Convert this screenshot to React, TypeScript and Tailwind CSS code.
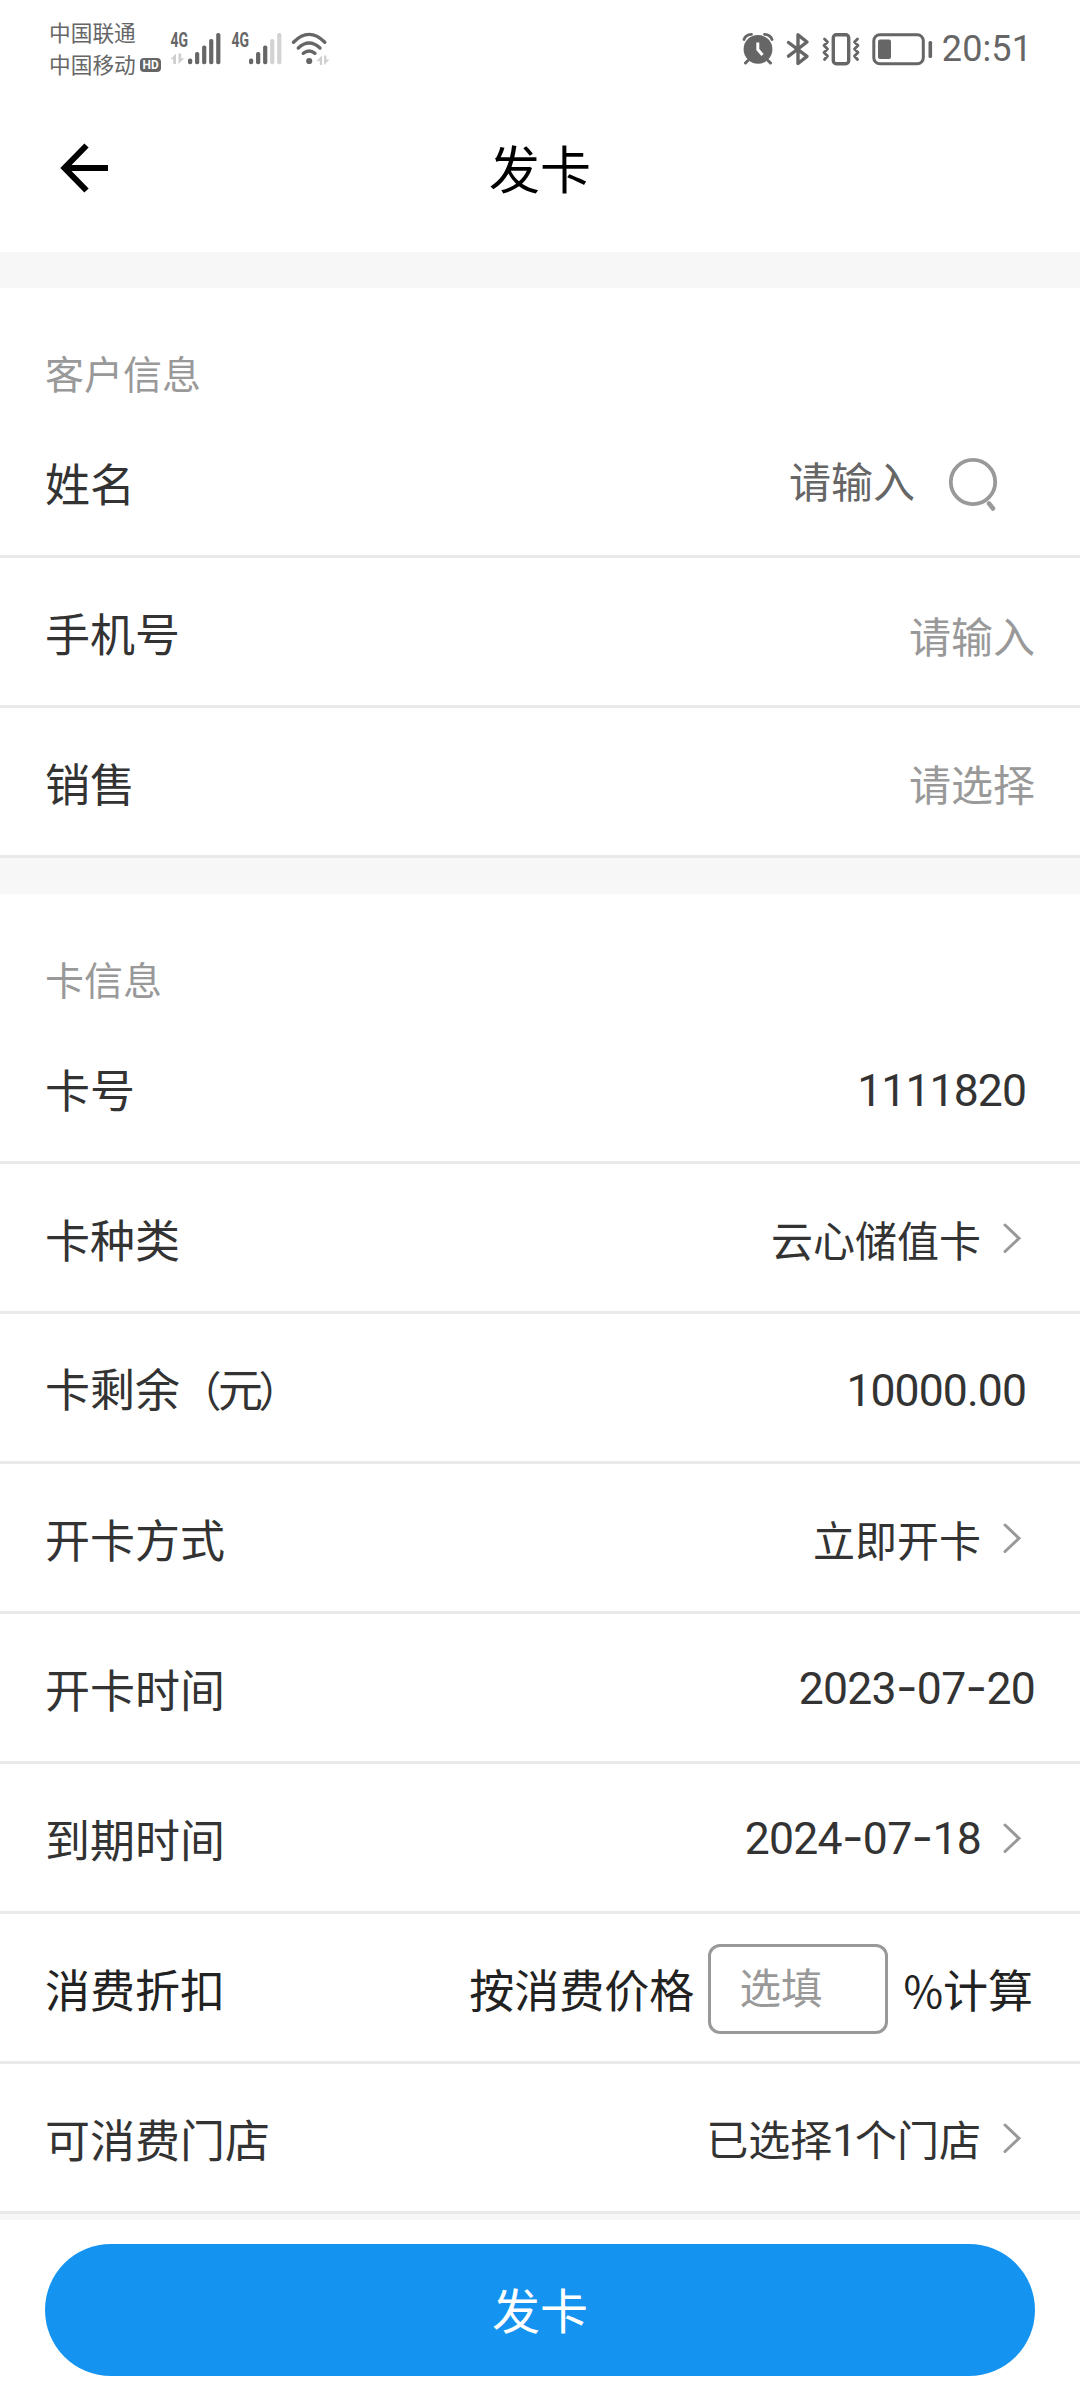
import React from "react";

const cjk = "font-['Noto_Sans_CJK_SC',sans-serif]";

function DataArrows({ x, y }: { x: number; y: number }) {
  return (
    <g transform={`translate(${x} ${y})`} fill="#cfcfcf">
      <path d="M5.500 0V10.500H2.700V5.800H0Z" />
      <path d="M8 10.500V0H10.700V4.700H14Z" />
    </g>
  );
}

function Signal({ level, arrows }: { level: number; arrows?: boolean }) {
  const tops = [28.5, 22, 15.5, 9, 3];
  return (
    <svg width="54" height="36" viewBox="0 0 54 36">
      <text x="2.5" y="17.300" fontFamily="Roboto, sans-serif" fontWeight="700" fontSize="19.500" textLength="17.5" lengthAdjust="spacingAndGlyphs" fill="#666">
        4G
      </text>
      {arrows && <DataArrows x={2.5} y={23.5} />}
      {tops.map((top, i) => (
        <rect key={top} x={20 + i * 7.05} y={top} width="4.2" height={34.2 - top} rx="1.8" fill={i < level ? "#666" : "#d3d3d3"} />
      ))}
    </svg>
  );
}

function StatusBar() {
  return (
    <div className="flex h-[97px] items-start justify-between pl-[49px] pr-[48px] text-[#666]">
      <div className="flex">
        <div className="flex w-[119px] flex-col pt-[16px] text-[21.7px] leading-[32px]">
          <span>中国联通</span>
          <div className="flex items-center">
            <span>中国移动</span>
            <svg className="ml-[4px] mt-[2px]" width="21" height="14" viewBox="0 0 21 14">
              <rect width="21" height="14" rx="4" fill="#666" />
              <text x="2.6" y="11.4" fontFamily="Roboto, sans-serif" fontWeight="700" fontSize="12.5" textLength="16" lengthAdjust="spacingAndGlyphs" fill="#fff">
                HD
              </text>
            </svg>
          </div>
        </div>
        <div className="flex pt-[30px]">
          <Signal level={5} arrows />
          <span className="w-[7px]" />
          <Signal level={3} />
          <svg className="ml-[7px]" width="42" height="36" viewBox="0 0 42 36">
            <g fill="none" stroke="#666" strokeWidth="3.4" strokeLinecap="round">
              <path d="M3.5 12.2Q19 -3.5 34.8 12.2" />
              <path d="M8.3 18Q19 8 30 18" />
              <path d="M13.3 23.3Q19 18.5 25 23.3" />
            </g>
            <circle cx="19.2" cy="31" r="3.1" fill="#666" />
            <g transform="translate(26.5 25.5)" fill="#cfcfcf">
              <path d="M5.5 0V9.6H3.300V5.600H0Z" />
              <path d="M7.6 9.600V0H9.800V4H13Z" />
            </g>
          </svg>
        </div>
      </div>
      <div className="flex items-center pt-[30px]">
        <svg width="32" height="38" viewBox="0 0 32 38">
          <circle cx="16" cy="19.3" r="14.4" fill="#666" />
          <path d="M2 9.5Q3.5 4.5 9.5 4.3M22.5 4.3Q28.500 4.500 30 9.500" fill="none" stroke="#666" strokeWidth="2.800" strokeLinecap="round" />
          <path d="M6 30.500L3.500 33M26 30.500L28.500 33" stroke="#666" strokeWidth="3" strokeLinecap="round" />
          <path d="M15.8 12.500V19.500L20.500 25" fill="none" stroke="#fff" strokeWidth="3" />
        </svg>
        <svg className="ml-[12px]" width="24" height="38" viewBox="0 0 24 38">
          <path d="M2.500 12.500L21 26.300L12 33.500V4.800L21 12L2.500 26.200" fill="none" stroke="#666" strokeWidth="3.400" strokeLinejoin="round" strokeLinecap="round" />
        </svg>
        <svg className="ml-[11px]" width="40" height="38" viewBox="0 0 40 38">
          <rect x="12.300" y="4.700" width="15.400" height="29" rx="3" fill="none" stroke="#666" strokeWidth="3.400" />
          <path d="M3.500 9L6.500 12L3 15.500L6.500 19L3 22.500L6.500 26L3.500 29.500M36.500 9L33.500 12L37 15.500L33.500 19L37 22.500L33.500 26L36.500 29.500" fill="none" stroke="#666" strokeWidth="2.800" strokeLinejoin="round" strokeLinecap="round" />
        </svg>
        <svg className="ml-[11px]" width="62" height="38" viewBox="0 0 62 38">
          <rect x="1.800" y="4.800" width="49.500" height="29" rx="6" fill="none" stroke="#666" strokeWidth="3" />
          <rect x="6" y="9.500" width="13" height="19.500" rx="2" fill="#666" />
          <rect x="56.500" y="11" width="3.600" height="17" rx="1.500" fill="#666" />
        </svg>
        <span className="ml-[8px] font-[Roboto] text-[36px] leading-[38px] tracking-[0.1px]">20:51</span>
      </div>
    </div>
  );
}

function Header() {
  return (
    <header className="grid h-[155px] grid-cols-[200px_1fr_200px] pt-[32px]">
      <svg className="ml-[60px] mt-[14px]" width="50" height="50" viewBox="0 0 50 50" fill="none" stroke="#000" strokeWidth="6">
        <path d="M26.500 2.500L4.500 25L26.500 47.500M4 25H48" />
      </svg>
      <h1 className="text-center text-[51px] leading-[76px] text-black">发卡</h1>
    </header>
  );
}

function SectionTitle({ children }: { children: React.ReactNode }) {
  return <h2 className="h-[120px] px-[45px] pt-[54px] text-[39px] leading-[60px] text-[#999]">{children}</h2>;
}

function Row({ label, children, pad = "pr-[45px]" }: { label: React.ReactNode; children: React.ReactNode; pad?: string }) {
  return (
    <div className={`flex h-[150px] items-center justify-between border-b-[3px] border-[#e9e9e9] pl-[45px] ${pad}`}>
      <span className="pt-[2px] text-[45px] leading-[60px] text-[#333]">{label}</span>
      <div className="flex items-center text-[42px] leading-[60px] text-[#333]">{children}</div>
    </div>
  );
}

function Chevron() {
  return (
    <svg className="ml-[21px]" width="20" height="32" viewBox="0 0 20 32" fill="none" stroke="#999" strokeWidth="3" strokeLinecap="round">
      <path d="M3 3L17 16.300L3 29.500" />
    </svg>
  );
}

function Num({ children }: { children: React.ReactNode }) {
  return <span className="pt-[6px] font-[Roboto] text-[44.5px] tracking-[-0.9px]">{children}</span>;
}

function DateText({ value }: { value: string }) {
  return (
    <span className="font-[Roboto] text-[44.5px] tracking-[-0.7px]">
      {value.split("-").map((part, i) => (
        <React.Fragment key={i}>
          {i > 0 && <span className="font-[Inter] text-[47px]">-</span>}
          {part}
        </React.Fragment>
      ))}
    </span>
  );
}

export default function App() {
  return (
    <div className={`flex h-[2400px] w-[1080px] flex-col overflow-hidden bg-white ${cjk}`} lang="zh-CN">
      <StatusBar />
      <Header />
      <div className="h-[36px] bg-[#f7f7f7]" />

      <section>
        <SectionTitle>客户信息</SectionTitle>
        <Row label="姓名" pad="pr-[81px]">
          <span className="-mt-[4px] text-[#666]">请输入</span>
          <svg className="ml-[33px] mt-[4px]" width="51" height="56" viewBox="0 0 51 56" fill="none" stroke="#999">
            <circle cx="25" cy="26" r="22.200" strokeWidth="3.800" />
            <path d="M41 47.500L45 52.500" strokeWidth="4.500" strokeLinecap="round" />
          </svg>
        </Row>
        <Row label="手机号">
          <span className="mt-[6px] text-[#999]">请输入</span>
        </Row>
        <Row label="销售">
          <span className="mt-[2px] text-[#999]">请选择</span>
        </Row>
      </section>
      <div className="h-[36px] bg-[#f7f7f7]" />

      <section>
        <SectionTitle>卡信息</SectionTitle>
        <Row label="卡号" pad="pr-[54px]">
          <Num>1111820</Num>
        </Row>
        <Row label="卡种类" pad="pr-[58px]">
          <span className="pt-[3px]">云心储值卡</span>
          <Chevron />
        </Row>
        <Row
          label={
            <span className="[font-feature-settings:'palt']">
              卡剩余<span className="-mr-[2px] ml-[19px] text-[42px]">（</span>元<span className="-ml-[3px] text-[42px]">）</span>
            </span>
          }
          pad="pr-[54px]"
        >
          <Num>10000.00</Num>
        </Row>
        <Row label="开卡方式" pad="pr-[58px]">
          <span className="pt-[3px]">立即开卡</span>
          <Chevron />
        </Row>
        <Row label="开卡时间">
          <DateText value="2023-07-20" />
        </Row>
        <Row label="到期时间" pad="pr-[58px]">
          <DateText value="2024-07-18" />
          <Chevron />
        </Row>
        <Row label={<span className="text-[#222]">消费折扣</span>} pad="pr-[47px]">
          <span className="pt-[2px] text-[45px] text-[#222]">按消费价格</span>
          <div className="ml-[14px] mt-[3px] flex h-[90px] w-[180px] items-center rounded-[12px] border-[3px] border-[#999] pb-[7px] pl-[28px] text-[41.5px] text-[#999]">选填</div>
          <span className="ml-[15px] pt-[2px] text-[45px] text-[#222]">
            <span className="text-[43px]">%</span>计算
          </span>
        </Row>
        <Row label="可消费门店" pad="pr-[58px]">
          <span className="pt-[4px]">
            已选择<span className="font-[Roboto] text-[44px] tracking-[-2px]">1</span>个门店
          </span>
          <Chevron />
        </Row>
      </section>
      <div className="h-[6px] bg-[#f7f7f7]" />

      <footer className="px-[45px] pt-[24px]">
        <button className="flex h-[132px] w-full items-center justify-center rounded-full bg-[#1593f0] pb-[4px] text-[48px] leading-[60px] text-white">发卡</button>
      </footer>
    </div>
  );
}
